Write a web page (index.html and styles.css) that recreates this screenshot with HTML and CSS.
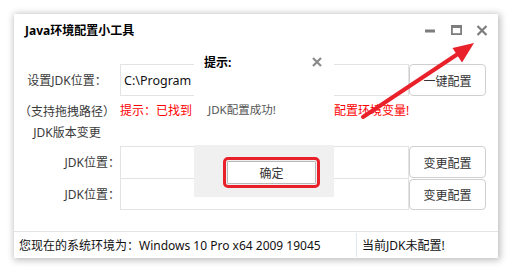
FILE: index.html
```html
<!DOCTYPE html>
<html lang="zh-CN">
<head>
<meta charset="utf-8">
<title>Java环境配置小工具</title>
<link rel="stylesheet" href="styles.css">
</head>
<body>
<div class="window">
  <div class="titlebar">
    <span class="title">Java环境配置小工具</span>
    <div class="controls">
      <svg class="ctl" width="12" height="12" viewBox="0 0 12 12"><rect x="1" y="4.5" width="10" height="3" fill="#7d7d7d"/></svg>
      <svg class="ctl" width="12" height="12" viewBox="0 0 12 12"><rect x="1" y="0" width="11" height="3" fill="#7d7d7d"/><rect x="1.9" y="1.5" width="9.2" height="7.6" fill="none" stroke="#7d7d7d" stroke-width="1.8"/></svg>
      <svg class="ctl" width="12" height="12" viewBox="0 0 12 12"><path d="M1.5 1 L10.5 10 M10.5 1 L1.5 10" stroke="#7d7d7d" stroke-width="2.2" fill="none"/></svg>
    </div>
  </div>
  <div class="content">
    <div class="label center">设置JDK位置：</div>
    <div class="input">C:\Program</div>
    <button class="btn">一键配置</button>

    <div class="label center notes"><div>（支持拖拽路径）</div><div>JDK版本变更</div></div>
    <div class="hint"><span>提示：已找到</span><span class="hint-end">配置环境变量!</span></div>

    <div class="label right">JDK位置：</div>
    <div class="input no-bottom"></div>
    <button class="btn">变更配置</button>

    <div class="label right">JDK位置：</div>
    <div class="input"></div>
    <button class="btn btn-low">变更配置</button>
  </div>
  <div class="statusbar">
    <div class="status-left">您现在的系统环境为：Windows 10 Pro x64 2009 19045</div>
    <div class="status-right">当前JDK未配置!</div>
  </div>

  <div class="dialog">
    <div class="dialog-head">
      <span class="dialog-title">提示:</span>
      <svg width="10" height="10" viewBox="0 0 10 10"><path d="M1 1 L9 9 M9 1 L1 9" stroke="#8a8a8a" stroke-width="2.2" fill="none"/></svg>
    </div>
    <div class="dialog-body">JDK配置成功!</div>
    <div class="dialog-foot"><button class="ok">确定</button></div>
  </div>
</div>
<svg class="arrow" width="517" height="272" viewBox="0 0 517 272">
  <line x1="363" y1="117" x2="460" y2="52.5" stroke="#e8212b" stroke-width="4" stroke-linecap="round"/>
  <polygon points="474,43 452.5,48 462,62.5" fill="#e8212b"/>
</svg>
</body>
</html>
```

FILE: styles.css
```css
* { box-sizing: border-box; }
html, body { margin: 0; padding: 0; }
body {
  background: #fff;
  width: 517px;
  height: 272px;
  position: relative;
  font-family: "Noto Sans", "Noto Sans CJK SC", sans-serif;
  font-size: 12px;
  color: #3a3a3a;
}
.window {
  position: relative;
  margin: 14px 0 0 14px;
  width: 484px;
  height: 244px;
  background: #fff;
  box-shadow: 1px 1px 7px 1px rgba(0,0,0,0.28);
  display: flex;
  flex-direction: column;
}
.titlebar {
  height: 32px;
  display: flex;
  align-items: center;
  justify-content: space-between;
  padding: 0 10px 0 11px;
}
.title {
  font-weight: bold;
  color: #000;
  font-size: 12px;
}
.controls {
  display: flex;
  gap: 14px;
  align-items: center;
  padding-top: 1px;
}
.ctl { display: block; }
.content {
  padding-top: 18px;
  display: grid;
  grid-template-columns: 106px 289px 77px;
  grid-template-rows: 32px 50px 32px 32px;
}
.label {
  display: flex;
  align-items: center;
  white-space: nowrap;
}
.label.center { justify-content: center; }
.label.right { justify-content: flex-end; padding-right: 0; }
.notes {
  flex-direction: column;
  justify-content: flex-start;
  align-items: center;
  padding-top: 2px;
  line-height: 21px;
}
.input {
  border: 1px solid #e3e3e3;
  display: flex;
  align-items: center;
  padding-left: 3px;
  color: #111;
  font-size: 12.5px;
}
.input.no-bottom { border-bottom: none; }
.btn {
  font-family: "Noto Sans CJK SC", sans-serif;
  font-size: 12px;
  color: #333;
  background: #fff;
  border: 1px solid #cfcfcf;
  border-radius: 4px;
  padding: 0;
}
.btn-low { margin-top: 1px; }
.hint {
  grid-column: 2 / 4;
  color: #ff0000;
  padding-top: 5px;
  line-height: 20px;
  white-space: nowrap;
  display: flex;
}
.hint-end { margin-left: 142px; }
.statusbar {
  margin-top: auto;
  height: 27px;
  border-top: 1px solid #e4e4e4;
  display: flex;
  align-items: stretch;
  color: #111;
}
.status-left {
  width: 342px;
  padding-left: 5px;
  display: flex;
  align-items: center;
}
.status-right {
  border-left: 1px solid #dbe9f5;
  margin: 1px 0;
  padding-left: 5px;
  display: flex;
  align-items: center;
}
.dialog {
  position: absolute;
  left: 180px;
  top: 30px;
  width: 140px;
  height: 153px;
  background: #fff;
  display: flex;
  flex-direction: column;
}
.dialog-head {
  height: 36px;
  display: flex;
  align-items: center;
  justify-content: space-between;
  padding: 0 12px 0 10px;
}
.dialog-title {
  font-weight: bold;
  color: #000;
}
.dialog-body {
  height: 65px;
  padding: 20px 0 0 14px;
  line-height: 20px;
  color: #555;
  font-size: 11.5px;
}
.dialog-foot {
  flex: 1;
  background: #f0f0f0;
  display: flex;
  align-items: flex-start;
  padding: 16px 0 0 33px;
}
.ok {
  font-family: "Noto Sans CJK SC", sans-serif;
  font-size: 12px;
  color: #333;
  width: 89px;
  height: 23px;
  background: #fff;
  border: 1px solid #b8b8b8;
  border-radius: 1px;
  padding: 0;
  outline: 3px solid #e8202a;
  outline-offset: 1px;
}
.arrow {
  position: absolute;
  left: 0;
  top: 0;
  pointer-events: none;
}
```
